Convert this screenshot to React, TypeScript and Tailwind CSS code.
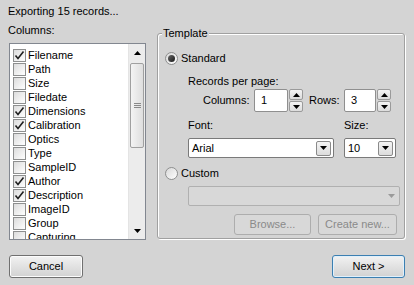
import React from "react";

const items: [string, boolean][] = [
  ["Filename", true],
  ["Path", false],
  ["Size", false],
  ["Filedate", false],
  ["Dimensions", true],
  ["Calibration", true],
  ["Optics", false],
  ["Type", false],
  ["SampleID", false],
  ["Author", true],
  ["Description", true],
  ["ImageID", false],
  ["Group", false],
  ["Capturing", false],
];

function Check({ on }: { on: boolean }) {
  return (
    <div className="w-[13px] h-[13px] shrink-0 border border-[#8e8f8f] bg-gradient-to-br from-[#dcdcdc] to-white flex items-center justify-center">
      {on && (
        <svg width="11" height="11" viewBox="0 0 11 11">
          <path d="M1.5 5.5 L4 8.5 L9.5 1.5" fill="none" stroke="#1f1f1f" strokeWidth="1.6" />
        </svg>
      )}
    </div>
  );
}

function Radio({ on }: { on: boolean }) {
  return (
    <div className="w-[13px] h-[13px] shrink-0 rounded-full border border-[#8e8f8f] bg-gradient-to-br from-[#d8d8d8] to-white flex items-center justify-center">
      {on && <div className="w-[7px] h-[7px] rounded-full bg-gradient-to-br from-[#6a6a6a] to-[#1a1a1a]" />}
    </div>
  );
}

function Tri({ up, color = "#000" }: { up?: boolean; color?: string }) {
  return (
    <svg width="7" height="4" viewBox="0 0 7 4">
      <path d={up ? "M0 4 L3.5 0 L7 4 Z" : "M0 0 L7 0 L3.5 4 Z"} fill={color} />
    </svg>
  );
}

function Spin({ value, w }: { value: string; w: string }) {
  return (
    <div className={`flex h-[23px] ${w}`}>
      <div className="flex-1 bg-white border border-[#8f8f8f] rounded-[2px] flex items-center pl-[6px]">{value}</div>
      <div className="w-[14px] ml-[1px] flex flex-col gap-[1px]">
        <div className="flex-1 border border-[#9a9a9a] rounded-[2px] bg-gradient-to-b from-[#f4f4f4] to-[#dcdcdc] flex items-center justify-center">
          <Tri up />
        </div>
        <div className="flex-1 border border-[#9a9a9a] rounded-[2px] bg-gradient-to-b from-[#f4f4f4] to-[#dcdcdc] flex items-center justify-center">
          <Tri />
        </div>
      </div>
    </div>
  );
}

function Combo({ value, w }: { value: string; w: string }) {
  return (
    <div className={`h-[20px] ${w} bg-white border border-[#7a7a7a] rounded-[2px] flex items-center pl-[3px] pr-[2px]`}>
      <span className="flex-1">{value}</span>
      <div className="w-[15px] h-[15px] border border-[#8a8a8a] rounded-[2px] bg-gradient-to-b from-[#f4f4f4] to-[#dcdcdc] flex items-center justify-center">
        <Tri />
      </div>
    </div>
  );
}

function Btn({ label, w, def, disabled }: { label: string; w: string; def?: boolean; disabled?: boolean }) {
  return (
    <div
      className={`${w} flex items-center justify-center rounded-[3px] border ${
        disabled
          ? "border-[#adadad] bg-[#d8d8d8] text-[#8a8a8a] h-[21px]"
          : def
          ? "border-[#3c7fb1] bg-gradient-to-b from-[#f2f2f2] to-[#d2d2d2] h-[23px] shadow-[inset_0_0_0_1px_#e0f0fb]"
          : "border-[#707070] bg-gradient-to-b from-[#f2f2f2] to-[#d2d2d2] h-[23px] shadow-[inset_0_0_0_1px_#fcfcfc]"
      }`}
    >
      {label}
    </div>
  );
}

export default function App() {
  return (
    <div className="w-[414px] h-[285px] bg-[#d4d4d4] text-[11px] leading-[13px] text-black overflow-hidden font-['Liberation_Sans',sans-serif]">
      <div className="pl-2 pt-[5px]">Exporting 15 records...</div>
      <div className="flex mt-[6px]">
        <div className="ml-2 w-[138px] flex flex-col">
          <div>Columns:</div>
          <div className="mt-[6px] ml-[1px] h-[197px] bg-white border border-[#828790] flex overflow-hidden">
            <div className="flex-1 pt-[4px] pl-[3px] overflow-hidden">
              {items.map(([n, on]) => (
                <div key={n} className="h-[14px] flex items-center gap-[2px] whitespace-nowrap">
                  <Check on={on} />
                  <span>{n}</span>
                </div>
              ))}
            </div>
            <div className="w-[17px] bg-[#ececec] border-l border-[#e4e4e4] flex flex-col">
              <div className="h-[17px] flex items-center justify-center">
                <Tri up />
              </div>
              <div className="mt-[2px] mx-[1px] h-[85px] rounded-[2px] border border-[#a0a0a0] bg-gradient-to-r from-[#f4f4f4] to-[#dedede] flex flex-col items-center justify-center gap-[1px]">
                <div className="w-[7px] h-px bg-[#8a8a8a]" />
                <div className="w-[7px] h-px bg-[#8a8a8a]" />
                <div className="w-[7px] h-px bg-[#8a8a8a]" />
              </div>
              <div className="flex-1" />
              <div className="h-[17px] flex items-center justify-center">
                <Tri />
              </div>
            </div>
          </div>
        </div>
        <div className="ml-[11px] mt-[9px] w-[248px] h-[206px] relative border border-[#a0a0a0] rounded-[3px] shadow-[inset_1px_1px_0_#fff,1px_1px_0_#fff]">
          <div className="absolute left-[4px] top-[-7px] px-[1px] bg-[#d4d4d4]">Template</div>
          <div className="flex flex-col pl-[7px]">
            <div className="mt-[18px] flex items-center gap-[3px]">
              <Radio on />
              <span>Standard</span>
            </div>
            <div className="mt-[10px] pl-[23px]">Records per page:</div>
            <div className="mt-[1px] flex items-center">
              <span className="ml-[38px] w-[51px]">Columns:</span>
              <Spin value="1" w="w-[49px]" />
              <span className="ml-[6px] w-[35px]">Rows:</span>
              <Spin value="3" w="w-[47px]" />
            </div>
            <div className="mt-[7px] flex pl-[23px]">
              <span className="w-[156px]">Font:</span>
              <span>Size:</span>
            </div>
            <div className="mt-[6px] flex pl-[23px] gap-[10px]">
              <Combo value="Arial" w="w-[146px]" />
              <Combo value="10" w="w-[52px]" />
            </div>
            <div className="mt-[9px] flex items-center gap-[3px]">
              <Radio on={false} />
              <span>Custom</span>
            </div>
            <div className="mt-[6px] ml-[23px] w-[212px] h-[20px] border border-[#b0b0b0] rounded-[2px] bg-[#d8d8d8] flex items-center justify-end pr-[4px]">
              <Tri color="#9a9a9a" />
            </div>
            <div className="mt-[8px] flex gap-[7px] ml-[69px]">
              <Btn label="Browse..." w="w-[77px]" disabled />
              <Btn label="Create new..." w="w-[79px]" disabled />
            </div>
          </div>
        </div>
      </div>
      <div className="flex justify-between px-[9px] mt-[15px]">
        <Btn label="Cancel" w="w-[74px]" />
        <Btn label="Next >" w="w-[73px]" def />
      </div>
    </div>
  );
}
